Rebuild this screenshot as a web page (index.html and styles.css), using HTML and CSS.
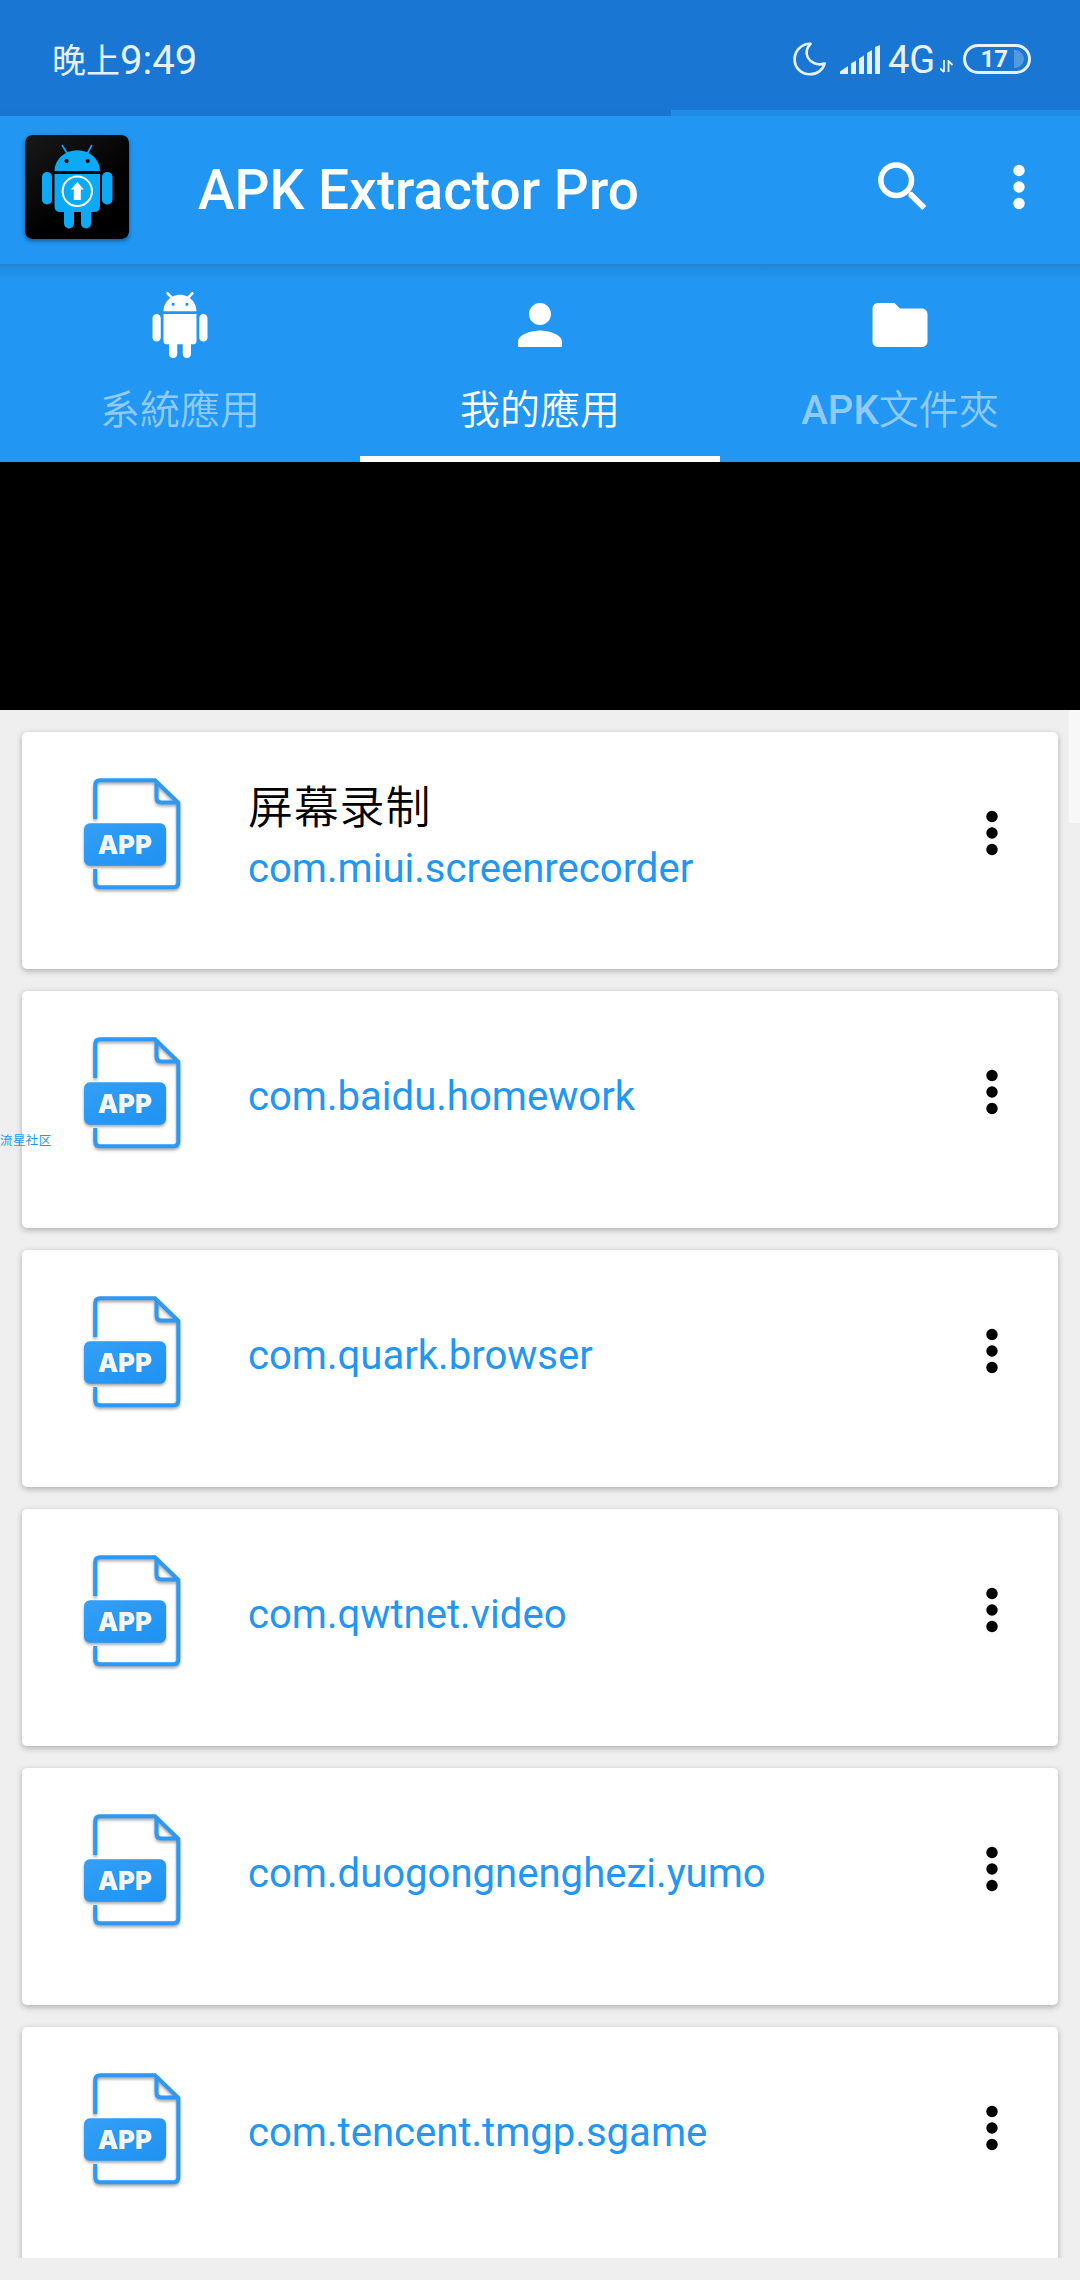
FILE: index.html
```html
<!DOCTYPE html>
<html lang="zh-Hant">
<head>
<meta charset="utf-8">
<title>APK Extractor Pro</title>
<link rel="stylesheet" href="styles.css">
</head>
<body>
<svg class="defs" aria-hidden="true">
  <defs>
    <linearGradient id="blue" x1="0" y1="0" x2="1" y2="1"><stop offset="0" stop-color="#349ff6"/><stop offset="1" stop-color="#1e92f3"/></linearGradient>
    <linearGradient id="night" x1="0" y1="0" x2=".7" y2="1"><stop offset="0" stop-color="#191919"/><stop offset=".7" stop-color="#000"/></linearGradient>
  </defs>
  <symbol id="file" viewBox="0 0 110 124">
    <g fill="none" stroke="#2b99f5" stroke-width="4">
      <path d="M18.2 45V11.300q0-5 5-5H78l23.300 22.500V108.200q0 5-5 5H23.200q-5 0-5-5V95"/>
      <path d="M79.500 7v16.500q0 5 5 5H101"/>
    </g>
    <rect x="7" y="49.300" width="82" height="42.500" rx="6" fill="url(#blue)"/>
    <text class="file-tag" x="21" y="79.500" textLength="54" lengthAdjust="spacingAndGlyphs">APP</text>
  </symbol>
  <symbol id="more" viewBox="0 0 66 66"><circle cx="33" cy="16.500" r="5.700"/><circle cx="33" cy="33" r="5.700"/><circle cx="33" cy="49.500" r="5.700"/></symbol>
</svg>

<header class="status">
  <div class="clock"><span class="period">晚上</span>9:49</div>
  <div class="indicators">
    <svg class="moon" viewBox="0 0 34 34"><path d="M17.500 1.800C10 1.500 1.600 7.500 1.600 17.200C1.600 26 8.500 32.300 16.700 32.300C24 32.300 30 28 31.700 21.500C24 24 17.500 20.500 14.800 15.500C12.500 10.500 14 5.500 17.500 1.800Z"/></svg>
    <svg class="signal" viewBox="0 0 40 29"><path d="M0 29v-2.500L8 21v8zM11 29V18.500l5-3V29zM19 29V13.500l5-3V29zM27 29V8l5-3v24zM35 29V2l5-2v29z"/></svg>
    <span class="net">4G</span>
    <svg class="traffic" viewBox="0 0 13 13"><path d="M4 0v12M0 8.500l4 3.500M8.500 12V1l4 4" fill="none"/></svg>
    <div class="battery"><span>17</span><i></i></div>
  </div>
</header>
<div class="progress"><i></i></div>

<div class="toolbar">
  <svg class="logo" viewBox="0 0 104 104">
    <rect width="104" height="104" rx="7" fill="url(#night)"/>
    <g fill="#0caaf5">
      <path d="M29.500 36a22.500 20.500 0 0 1 45.500 0z"/>
      <path d="M29.500 39H75V71q0 6-6 6H66v11.500a5 5 0 0 1-10 0V77H49v11.500a5 5 0 0 1-10 0V77H35.500q-6 0-6-6z"/>
      <rect x="17" y="37" width="10" height="32.500" rx="5"/><rect x="77" y="37" width="10.500" height="32.500" rx="5"/>
      <path d="M37 10l5.500 9M67 10l-5 9" stroke="#0caaf5" stroke-width="1.600"/>
    </g>
    <circle cx="41.500" cy="26" r="2.100"/><circle cx="62.700" cy="26" r="2.100"/>
    <circle cx="52.300" cy="56.300" r="14.700" fill="none" stroke="#fff" stroke-width="2"/>
    <path d="M52.300 47l6.500 7.500h-3V65h-7V54.500h-3z" fill="#fff"/>
  </svg>
  <h1>APK Extractor Pro</h1>
  <svg class="action" viewBox="0 0 66 66"><circle cx="26.200" cy="26.200" r="15.300" fill="none" stroke="#fff" stroke-width="5.500"/><path d="M38.500 40.500l1-2.500 2.500-.2L56.300 52l-4 4L38.500 42.500z"/></svg>
  <svg class="action" viewBox="0 0 66 66"><use href="#more"/></svg>
</div>

<nav class="tabs">
  <div class="tab">
    <svg viewBox="0 0 24 24"><path d="M6 18c0 .55.45 1 1 1h1v3.500c0 .83.67 1.500 1.500 1.500s1.500-.67 1.500-1.500V19h2v3.500c0 .83.67 1.500 1.500 1.500s1.500-.67 1.500-1.500V19h1c.55 0 1-.45 1-1V8H6v10zM3.500 8C2.670 8 2 8.670 2 9.500v7c0 .83.67 1.500 1.500 1.500S5 17.330 5 16.500v-7C5 8.670 4.330 8 3.500 8zm17 0c-.83 0-1.500.67-1.500 1.500v7c0 .83.67 1.500 1.500 1.500s1.500-.67 1.500-1.500v-7c0-.83-.67-1.500-1.500-1.500zm-4.970-5.840l1.300-1.300c.2-.2.2-.51 0-.71-.2-.2-.51-.2-.71 0l-1.480 1.480C13.850 1.230 12.950 1 12 1c-.96 0-1.860.23-2.660.63L7.850.15c-.2-.2-.51-.2-.71 0-.2.2-.2.51 0 .71l1.310 1.310C6.970 3.260 6 5.010 6 7h12c0-1.990-.97-3.750-2.470-4.840zM10 5H9V4h1v1zm5 0h-1V4h1v1z"/></svg>
    <span>系統應用</span>
  </div>
  <div class="tab active">
    <svg viewBox="0 0 24 24"><path d="M12 12c2.210 0 4-1.790 4-4s-1.790-4-4-4-4 1.790-4 4 1.790 4 4 4zm0 2c-2.670 0-8 1.340-8 4v2h16v-2c0-2.660-5.330-4-8-4z"/></svg>
    <span>我的應用</span>
  </div>
  <div class="tab">
    <svg viewBox="0 0 24 24"><path d="M10 4H4c-1.100 0-1.990.9-1.990 2L2 18c0 1.100.9 2 2 2h16c1.100 0 2-.9 2-2V8c0-1.100-.9-2-2-2h-8l-2-2z"/></svg>
    <span><b>APK</b>文件夾</span>
  </div>
</nav>
<div class="banner"></div>

<main class="list">
  <article class="card"><svg class="file"><use href="#file"/></svg><div class="info"><h2>屏幕录制</h2><p>com.miui.screenrecorder</p></div><svg class="more"><use href="#more"/></svg></article>
  <article class="card"><svg class="file"><use href="#file"/></svg><div class="info"><p>com.baidu.homework</p></div><svg class="more"><use href="#more"/></svg></article>
  <article class="card"><svg class="file"><use href="#file"/></svg><div class="info"><p>com.quark.browser</p></div><svg class="more"><use href="#more"/></svg></article>
  <article class="card"><svg class="file"><use href="#file"/></svg><div class="info"><p>com.qwtnet.video</p></div><svg class="more"><use href="#more"/></svg></article>
  <article class="card"><svg class="file"><use href="#file"/></svg><div class="info"><p>com.duogongnenghezi.yumo</p></div><svg class="more"><use href="#more"/></svg></article>
  <article class="card"><svg class="file"><use href="#file"/></svg><div class="info"><p>com.tencent.tmgp.sgame</p></div><svg class="more"><use href="#more"/></svg></article>
  <i class="scroll-thumb"></i>
  <span class="watermark">流星社区</span>
</main>
</body>
</html>
```
FILE: styles.css
```css
* { box-sizing: border-box; margin: 0; }
body {
  width: 1080px;
  height: 2280px;
  overflow: hidden;
  background: #efefef;
  font-family: Roboto, "Noto Sans CJK TC", sans-serif;
}
svg { display: block; flex: none; }
.defs { position: absolute; width: 0; height: 0; }

.status {
  height: 110px;
  padding: 8px 49px 0 52px;
  background: #1976d3;
  color: #e8f1fb;
  display: flex;
  align-items: center;
  justify-content: space-between;
}
.clock { padding-top: 3px; white-space: nowrap; font-size: 40px; line-height: 52px; }
.period { font-family: "Noto Sans CJK SC", sans-serif; font-size: 34px; line-height: 40px; vertical-align: 1.5px; }
.indicators { display: flex; align-items: center; }
.moon { width: 34px; height: 34px; margin-top: -1px; fill: none; stroke: #e8f1fb; stroke-width: 2.6; stroke-linejoin: round; }
.signal { width: 40px; height: 29px; margin-left: 13px; fill: #e8f1fb; }
.net { margin-left: 8px; width: 49px; font-size: 38px; line-height: 44px; padding-top: 2px; }
.traffic { width: 13px; height: 13px; margin: 14px 0 0 3px; stroke: #e8f1fb; stroke-width: 1.8; }
.battery {
  width: 68px;
  height: 30px;
  margin-left: 10px;
  padding-right: 4px;
  border: 3px solid #e8f1fb;
  border-radius: 15px;
  display: flex;
  align-items: center;
  justify-content: flex-end;
  gap: 6px;
  font-size: 24px;
  font-weight: 700;
}
.battery i { width: 10px; height: 18px; border-radius: 0 9px 9px 0; background: #5499de; }

.progress { height: 6px; background: #1e8de9; }
.progress i { display: block; width: 671px; height: 6px; background: #1975d0; }

.toolbar {
  height: 148px;
  padding: 0 28px 0 25px;
  background: #2196f3;
  display: flex;
  align-items: center;
  color: #fff;
}
.logo { width: 104px; height: 104px; margin-bottom: 6px; border-radius: 7px; box-shadow: 0 2px 4px rgba(0, 0, 0, .4); }
.toolbar h1 { flex: 1; margin-left: 69px; font-size: 55px; font-weight: 500; line-height: 66px; }
.action { width: 66px; height: 66px; margin: 0 0 6px 50px; fill: #fff; }

.tabs {
  height: 198px;
  background: linear-gradient(#1d85d8, #208fe8 6px, #2196f3 16px);
  display: grid;
  grid-template-columns: repeat(3, 1fr);
}
.tab {
  padding-top: 28px;
  display: flex;
  flex-direction: column;
  align-items: center;
  gap: 24px;
  color: #90caf9;
  font-size: 40px;
  font-weight: 350;
  line-height: 57px;
}
.tab svg { width: 66px; height: 66px; fill: #fff; }
.tab b { font-weight: 500; }
.tab.active { color: #fff; border-bottom: 6px solid #fff; }
.banner { height: 248px; background: #000; }

.list {
  position: relative;
  height: 1548px;
  padding: 22px 22px 0;
  overflow: hidden;
  display: flex;
  flex-direction: column;
  gap: 22px;
}
.card {
  flex: none;
  height: 237px;
  padding: 0 33px 0 55px;
  border-radius: 5px;
  background: #fff;
  box-shadow: 0 2px 6px rgba(0, 0, 0, .28);
  display: flex;
  align-items: flex-start;
}
.file { width: 110px; height: 124px; margin-top: 42px; filter: drop-shadow(0 2px 1.500px rgba(0, 0, 0, .35)); }
.file-tag { font: 900 25.5px Inter, sans-serif; fill: #f4f4f4; }
.info { flex: 1; height: 208px; margin-left: 61px; display: flex; flex-direction: column; justify-content: center; }
.info h2 { margin-bottom: 4px; font: 350 45px/61px "Noto Sans CJK SC", sans-serif; letter-spacing: .8px; color: #000; }
.info p { font-size: 40.1px; line-height: 60px; color: #2196f3; }
.info p:only-child { padding-top: 3px; }
.more { width: 66px; height: 66px; margin-top: 68px; }

.scroll-thumb { position: absolute; top: 0; right: 0; width: 11px; height: 113px; background: #f8f8f8; }
.watermark {
  position: absolute;
  top: 420px;
  left: 0;
  font: 12.500px/20px "Noto Sans CJK SC", sans-serif;
  letter-spacing: .4px;
  color: #2196f3;
}
```
